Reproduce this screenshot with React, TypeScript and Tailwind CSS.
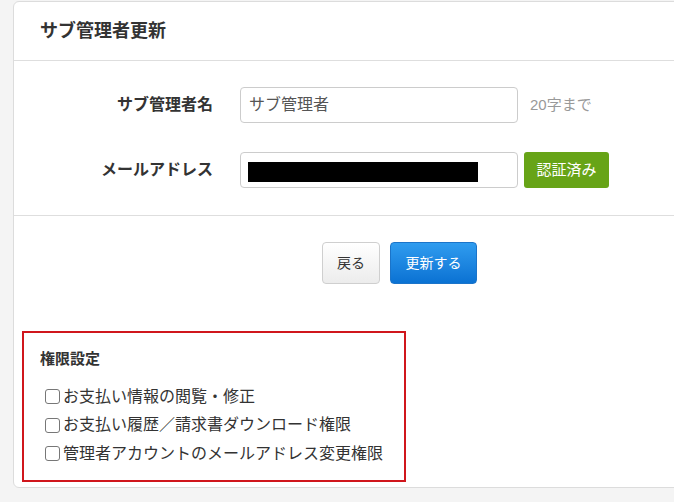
const font = "font-['Liberation_Sans','Noto_Sans_CJK_JP',sans-serif]";

const permissions = [
  "お支払い情報の閲覧・修正",
  "お支払い履歴／請求書ダウンロード権限",
  "管理者アカウントのメールアドレス変更権限",
];

export default function App() {
  return (
    <div className={`min-h-[502px] w-[674px] overflow-hidden bg-[#f4f4f4] pt-px text-[#333] ${font}`}>
      <div className="ml-[13px] w-[780px] rounded-[6px] border border-[#dcdcdc] bg-white pb-[5px]">
        {/* ヘッダー */}
        <div className="flex h-[59px] items-center border-b border-[#dedede] pl-[26px]">
          <h1 className="text-[18px] font-bold text-[#333]">サブ管理者更新</h1>
        </div>

        {/* フォーム */}
        <div className="flex flex-col gap-[29px] border-b border-[#dedede] pt-[26px] pb-[27px]">
          <div className="flex items-center">
            <label className="w-[199px] text-right text-[16px] font-bold text-[#333]">サブ管理者名</label>
            <div className="ml-[27px] flex h-[36px] w-[278px] items-center rounded-[4px] border border-[#cccccc] pl-[8px] text-[16px] text-[#555]">
              サブ管理者
            </div>
            <span className="ml-[12px] text-[15px] text-[#999]">20字まで</span>
          </div>
          <div className="flex items-center">
            <label className="w-[199px] text-right text-[16px] font-bold text-[#333]">メールアドレス</label>
            <div className="ml-[27px] flex h-[36px] w-[278px] items-center rounded-[4px] border border-[#cccccc] pl-[7px]">
              <span className="mt-[4px] block h-[20px] w-[230px] bg-black" />
            </div>
            <span className="ml-[6px] flex h-[36px] w-[85px] items-center justify-center rounded-[3px] bg-[#67a417] text-[15px] text-white">
              認証済み
            </span>
          </div>
        </div>

        {/* ボタン */}
        <div className="flex gap-[10px] pt-[26px] pl-[308px]">
          <button className="h-[42px] w-[58px] rounded-[4px] border border-[#cfcfcf] bg-gradient-to-b from-white to-[#ececec] text-[14px] text-[#333]">
            戻る
          </button>
          <button className="h-[42px] w-[87px] rounded-[4px] border border-[#1b74c9] bg-gradient-to-b from-[#2f9cef] to-[#0a72d3] text-[14px] text-white">
            更新する
          </button>
        </div>

        {/* 権限設定 */}
        <div className="mt-[47px] ml-[8px] h-[151px] w-[384px] border-2 border-[#d0161c] pt-[15px] pl-[16px]">
          <h2 className="text-[15px] font-bold text-[#333]">権限設定</h2>
          <div className="mt-[16px] flex flex-col gap-[8px]">
            {permissions.map((p) => (
              <label key={p} className="flex h-[20.5px] items-center text-[16px] text-[#333]">
                <input
                  type="checkbox"
                  className="ml-[5px] mr-[3px] h-[15px] w-[15px] appearance-none rounded-[3px] border border-[#777] bg-white"
                />
                {p}
              </label>
            ))}
          </div>
        </div>
      </div>
    </div>
  );
}
